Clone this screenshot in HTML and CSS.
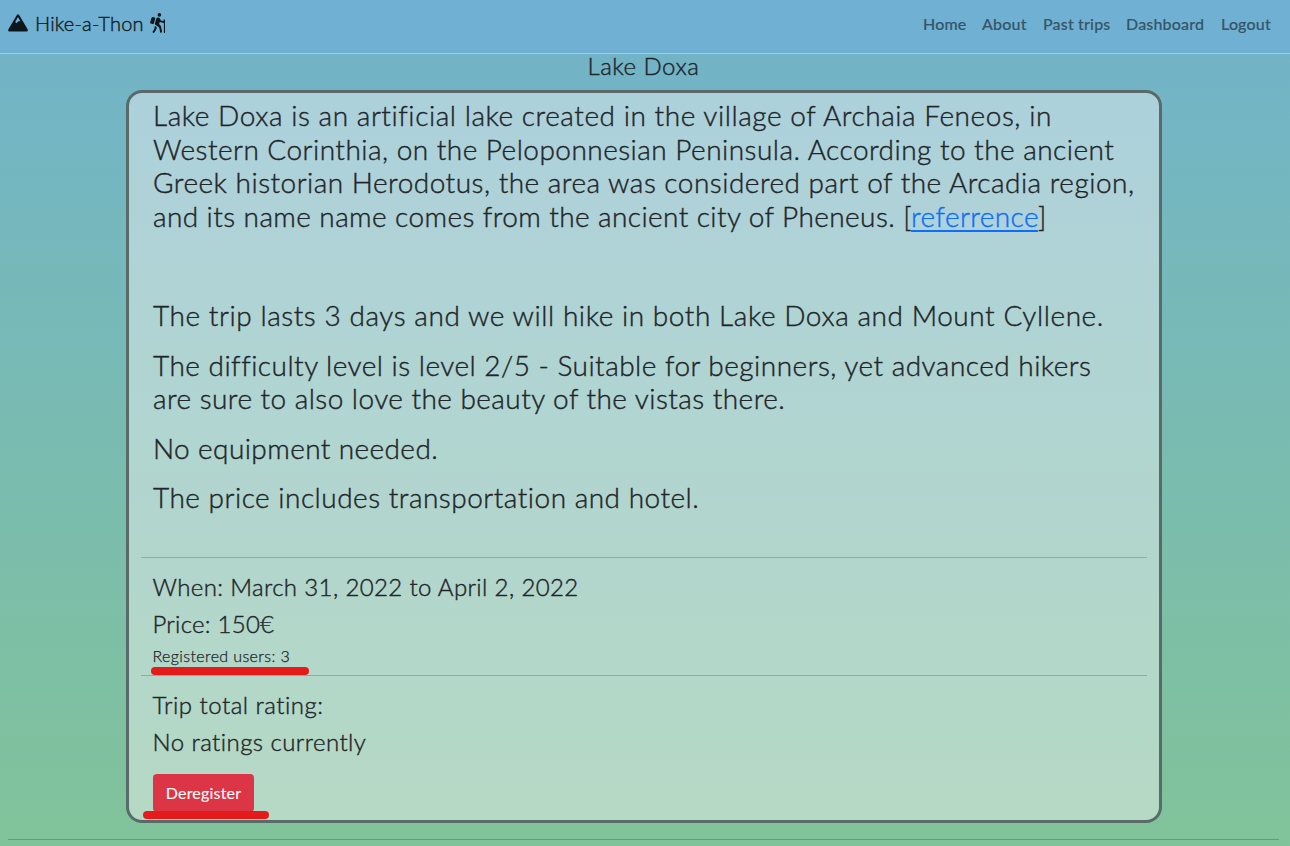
FILE: index.html
```html
<!DOCTYPE html>
<html lang="en">
<head>
<meta charset="utf-8">
<title>Hike-a-Thon</title>
<link rel="stylesheet" href="styles.css">
</head>
<body>
<nav class="navbar">
  <a class="brand">
    <svg class="mountain" viewBox="0 0 20 18"><path fill-rule="evenodd" d="M9 .8Q10 -.5 11 .8L19.6 15.3Q20.5 17.4 18.4 17.6H1.6Q-.5 17.4.4 15.3ZM10 3.1L7.2 8L8.4 9.2L10.3 7.2H12.4Z"/></svg>
    <span class="brand-name">Hike-a-Thon</span>
    <svg class="hiker" viewBox="0 0 16 20"><circle cx="9.4" cy="1.9" r="1.8"/><path d="M2.7 4.1L5.5 4.8L3.6 11.2L.7 10.4Q-.1 10.1.2 9.2L1.5 4.9Q1.8 4 2.7 4.1ZM7.8 4.4Q9.4 4.2 10 5.7L10.8 7.4L13.6 8V6.6H15V20H13.9V10.1L9.8 9.1L9.1 11.1L11 13.2L12 18.6Q11.7 20.3 10.2 19.7L9.2 14.6L5.3 11.7Q4.7 11 5 10L6.4 5.5Q6.8 4.5 7.8 4.4ZM4.9 12.8L6.9 14.5L6 17.1L4.1 19.7Q3 20.3 2.4 19.1L4.2 16.2Z"/></svg>
  </a>
  <div class="links"><a class="home">Home</a><a class="about">About</a><a class="past">Past trips</a><a class="dash">Dashboard</a><a class="logout">Logout</a></div>
</nav>
<main>
  <h1 class="title">Lake Doxa</h1>
  <article class="card">
    <section class="description">
      <p><span class="l1">Lake Doxa is an artificial lake created in the village of Archaia Feneos, in</span><br><span class="l2">Western Corinthia, on the Peloponnesian Peninsula. According to the ancient</span><br><span class="l3">Greek historian Herodotus, the area was considered part of the Arcadia region,</span><br><span class="l4">and its name name comes from the ancient city of Pheneus. [<a class="reference">referrence</a>]</span></p>
      <p>&nbsp;</p>
      <p><span class="l5">The trip lasts 3 days and we will hike in both Lake Doxa and Mount Cyllene.</span></p>
      <p><span class="l6">The difficulty level is level 2/5 - Suitable for beginners, yet advanced hikers</span><br><span class="l7">are sure to also love the beauty of the vistas there.</span></p>
      <p><span class="l8">No equipment needed.</span></p>
      <p><span class="l9">The price includes transportation and hotel.</span></p>
    </section>
    <section class="details">
      <h2><span class="when">When: March 31, 2022 to April 2, 2022</span></h2>
      <h2><span class="price">Price: 150€</span></h2>
      <div class="registered">Registered users: 3<i class="mark mark-users"></i></div>
    </section>
    <section class="rating">
      <h2><span class="total">Trip total rating:</span></h2>
      <h2><span class="none">No ratings currently</span></h2>
      <div class="action"><button class="deregister">Deregister</button><i class="mark mark-button"></i></div>
    </section>
  </article>
</main>
<hr class="footer-line">
</body>
</html>
```
FILE: styles.css
```css
* { box-sizing: border-box; }
html { height: 846px; overflow: hidden; background: linear-gradient(#71b3ca, #81c399); }
body { margin: 0; color: #212529; font-family: Lato, "Open Sans", sans-serif; font-weight: 300; -webkit-text-stroke: .4px; }
.navbar { height: 54px; background: #70b1d3; border-bottom: 1px solid #a5cfe5; display: flex; justify-content: space-between; padding: 0 17px 7px 8px; align-items: center; }
.brand { display: flex; align-items: center; color: #111c22; }
.mountain { width: 20px; height: 18px; fill: #0d161b; margin-right: 7px; }
.brand-name { font-size: 20px; font-weight: 300; letter-spacing: .2px; width: 115px; white-space: nowrap; }
.hiker { width: 16px; height: 20px; fill: #0d161b; }
.links { display: flex; gap: 16px; font-size: 16px; font-weight: 500; color: #365568; -webkit-text-stroke: .15px; letter-spacing: .18px; }
.links a { white-space: nowrap; }
.home { width: 43px; }
.about { width: 45px; }
.past { width: 67px; }
.dash { width: 79px; }
.logout { width: 52px; }
.title { margin: 0; font-size: 24px; line-height: 24px; font-weight: 300; letter-spacing: .5px; text-align: center; height: 36px; padding-right: 3px; }
.card { width: 1036px; height: 733px; margin: 0 0 0 126px; border: 3px solid #596b68; border-radius: 16px; background: rgba(248,246,248,.44); padding: 6px 12px 0; }
.description { height: 458px; padding: 0 12px; }
.description p { margin: 0 0 16px; font-size: 28px; line-height: 33.6px; letter-spacing: .5px; white-space: nowrap; }
.l1 { letter-spacing: .55px; }
.l2 { letter-spacing: .47px; }
.l3 { letter-spacing: .49px; }
.l4 { letter-spacing: .41px; }
.l5 { letter-spacing: .56px; }
.l6 { letter-spacing: .48px; }
.l7 { letter-spacing: .45px; }
.l8 { letter-spacing: .4px; }
.reference { color: #0d6efd; text-decoration: underline; text-decoration-thickness: 2px; text-underline-offset: 3px; }
.details { height: 118px; border-top: 1px solid #8bada8; padding: 14px 12px 0 11.5px; }
h2 { margin: 0 0 8px; font-size: 24px; line-height: 29px; font-weight: 300; letter-spacing: .5px; }
.when { letter-spacing: .37px; }
.price { letter-spacing: .25px; }
.none { letter-spacing: .44px; }
.registered { position: relative; font-size: 16px; line-height: 24px; margin-top: -2px; letter-spacing: .38px; -webkit-text-stroke: .25px; }
.rating { border-top: 1px solid #8bada1; padding: 14px 12px 0 11.5px; }
.action { position: relative; margin: 18px 0 0 .5px; }
.deregister { display: block; width: 101px; height: 38px; padding: 0 0 2px; border: 0; border-radius: 4px; background: #dc3545; color: white; font: 400 16px Lato, sans-serif; letter-spacing: .2px; -webkit-text-stroke: .1px; }
.mark { position: absolute; height: 8px; border-radius: 4px; background: #e51b1b; }
.mark-users { left: -1.5px; top: 23px; width: 158px; }
.mark-button { left: -10px; top: 37px; width: 126px; }
.footer-line { margin: 16px 11px 0 8px; border: 0; border-top: 1px solid #629b7b; }
```
